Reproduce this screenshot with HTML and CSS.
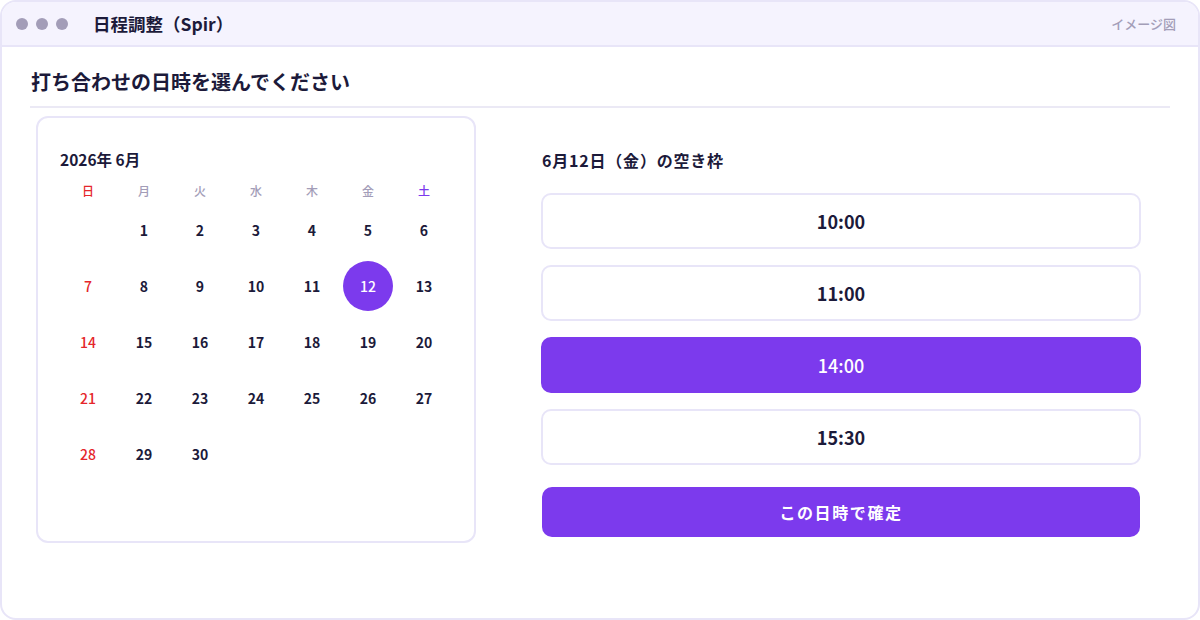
FILE: index.html
```html
<!DOCTYPE html>
<html lang="ja">
<head>
  <meta charset="UTF-8" />
  <meta name="viewport" content="width=device-width, initial-scale=1.0"/>
  <title>日程調整（Spir）</title>
  <link rel="stylesheet" href="styles.css">
</head>
<body>

  <div class="window">
    <!-- Title bar -->
    <header class="titlebar">
      <div class="dots">
        <span class="dot"></span>
        <span class="dot"></span>
        <span class="dot"></span>
      </div>
      <h1>日程調整（Spir）</h1>
      <span class="tag">イメージ図</span>
    </header>

    <main class="content">
      <h2 class="heading">打ち合わせの日時を選んでください</h2>

      <div class="body-row">
        <!-- Calendar -->
        <section class="calendar">
          <div class="month">2026年 6月</div>
          <div class="grid">
            <div class="wd sun">日</div>
            <div class="wd">月</div>
            <div class="wd">火</div>
            <div class="wd">水</div>
            <div class="wd">木</div>
            <div class="wd">金</div>
            <div class="wd sat">土</div>
          </div>
          <div class="grid days" id="days"></div>
        </section>

        <!-- Time slots -->
        <section class="slots">
          <div class="slots-title">6月12日（金）の空き枠</div>
          <button class="slot">10:00</button>
          <button class="slot">11:00</button>
          <button class="slot active">14:00</button>
          <button class="slot">15:30</button>
          <button class="confirm">この日時で確定</button>
        </section>
      </div>
    </main>
  </div>

  <script>
    // June 2026 starts on a Monday
    const days = document.getElementById('days');
    const firstDay = 1;
    const total = 30;
    const selected = 12;

    for (let i = 0; i < firstDay; i++) {
      days.appendChild(document.createElement('div'));
    }
    for (let d = 1; d <= total; d++) {
      const cell = document.createElement('div');
      cell.className = 'day';
      if ((firstDay + d - 1) % 7 === 0) cell.classList.add('sun');
      const num = document.createElement('span');
      num.textContent = d;
      if (d === selected) num.className = 'picked';
      cell.appendChild(num);
      days.appendChild(cell);
    }
  </script>

</body>
</html>
```

FILE: styles.css
```css
* { box-sizing: border-box; }
html, body {
  margin: 0;
  height: 100%;
  background: #fff;
}
body {
  font-family: "Noto Sans CJK JP", "Noto Sans", sans-serif;
  color: #1c1a3a;
}
.window {
  height: 620px;
  border: 2px solid #e8e5f8;
  border-radius: 16px;
  overflow: hidden;
  background: #fff;
}
.titlebar {
  height: 45px;
  background: #f5f3fe;
  border-bottom: 2px solid #e8e5f8;
  display: flex;
  align-items: center;
  padding: 0 22px 0 14px;
}
.dots {
  display: flex;
  gap: 8px;
}
.dot {
  width: 12px;
  height: 12px;
  border-radius: 50%;
  background: #a39db8;
}
.titlebar h1 {
  margin: 0 0 0 25px;
  font-size: 17.5px;
  font-weight: 700;
  flex: 1;
}
.tag {
  font-size: 13px;
  color: #a39db8;
  font-weight: 500;
}
.content {
  padding: 0 28px;
}
.heading {
  margin: 0;
  padding: 20px 0 10px 1px;
  font-size: 20px;
  font-weight: 700;
  border-bottom: 2px solid #ebe9f5;
}
.body-row {
  display: flex;
  gap: 65px;
  padding: 8px 6px 0;
}
.calendar {
  width: 440px;
  height: 427px;
  border: 2px solid #e8e5f8;
  border-radius: 12px;
  padding: 30px 22px 0;
}
.month {
  font-size: 15.5px;
  font-weight: 700;
  margin-bottom: 8px;
}
.grid {
  display: grid;
  grid-template-columns: repeat(7, 56px);
}
.wd {
  height: 24px;
  display: flex;
  align-items: center;
  justify-content: center;
  font-size: 12px;
  color: #a39db8;
  font-weight: 500;
}
.wd.sun { color: #e5262b; }
.wd.sat { color: #7c3aed; }
.day {
  height: 56px;
  display: flex;
  align-items: center;
  justify-content: center;
  font-size: 14px;
  font-weight: 700;
}
.day.sun { color: #e5262b; font-weight: 500; }
.day span {
  width: 50px;
  height: 50px;
  display: flex;
  align-items: center;
  justify-content: center;
  border-radius: 50%;
}
.day .picked {
  background: #7c3aed;
  color: #fff;
  font-weight: 500;
}
.slots {
  width: 600px;
  display: flex;
  flex-direction: column;
  gap: 16px;
}
.slots-title {
  font-size: 16px;
  letter-spacing: 0.8px;
  font-weight: 700;
  padding: 32px 0 6px 1px;
  margin-bottom: -1px;
}
.slot {
  height: 56px;
  border: 2px solid #e8e5f8;
  border-radius: 10px;
  background: #fff;
  font-family: inherit;
  font-size: 18px;
  font-weight: 700;
  color: #1c1a3a;
  cursor: pointer;
}
.slot.active {
  background: #7c3aed;
  border-color: #7c3aed;
  color: #fff;
  font-weight: 500;
}
.confirm {
  margin: 6px 1px 0;
  height: 50px;
  border: none;
  border-radius: 10px;
  background: #7c3aed;
  color: #fff;
  font-family: inherit;
  font-size: 16px;
  letter-spacing: 1.6px;
  font-weight: 700;
  cursor: pointer;
}
```
